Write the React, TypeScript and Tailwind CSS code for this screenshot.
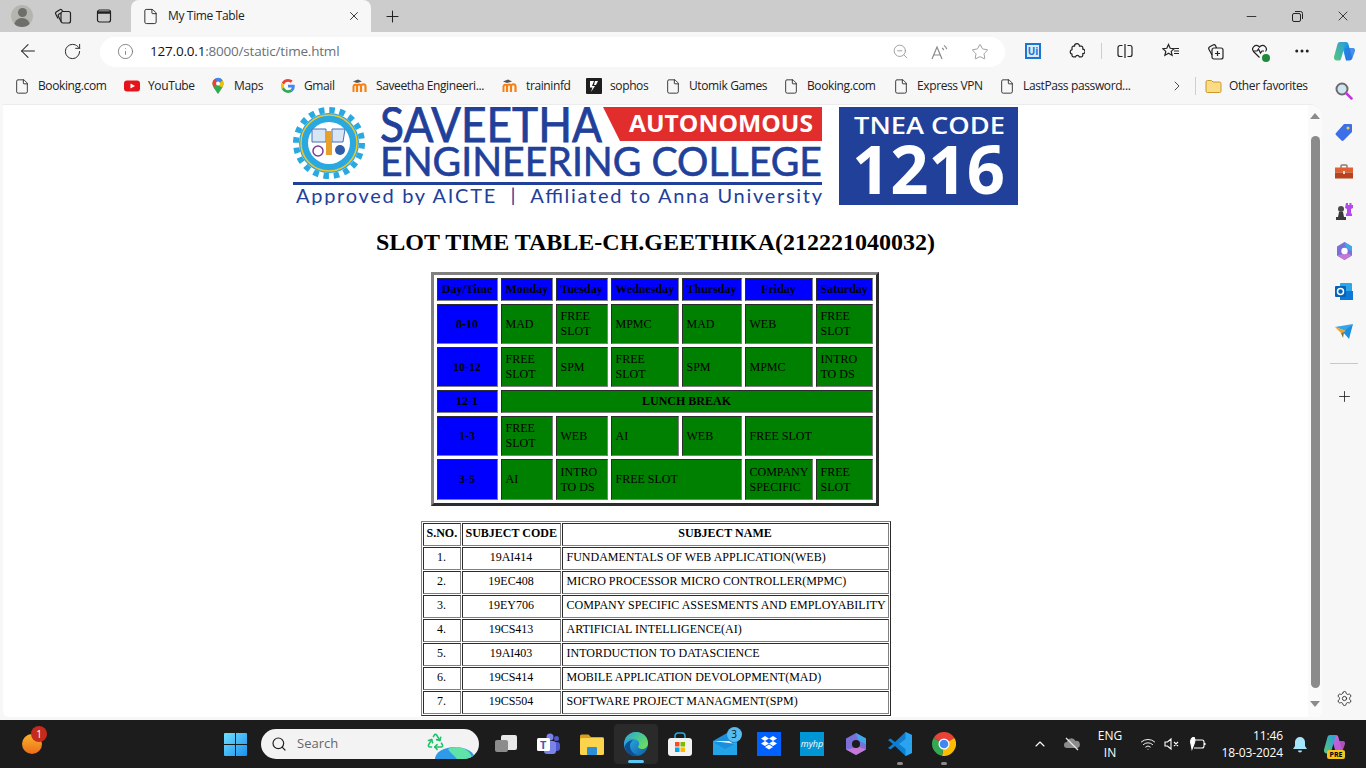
import { ArrowLeft, RotateCw, Info, ZoomOut, Star, X, Minus, Plus, MoreHorizontal, ChevronRight, ChevronUp, Settings, Search, Wifi, File, Recycle } from "lucide-react";
import type { ReactNode } from "react";

const ui = "font-['Open_Sans',sans-serif]";

const FileIcon = () => <File size={17} strokeWidth={1.3} className="text-[#222]" />;

const YouTubeIcon = () => (
  <svg width="16" height="16" viewBox="0 0 16 16"><rect y="2.500" width="16" height="11" rx="3" fill="#e6141a" /><path d="M6.500 5.500 11 8l-4.500 2.500z" fill="#fff" /></svg>
);
const MapsIcon = () => (
  <svg width="16" height="18" viewBox="0 0 16 18">
    <path d="M8 17C5 12.500 2.500 10 2.500 6.500a5.500 5.500 0 0 1 11 0C13.500 10 11 12.500 8 17z" fill="#34a853" />
    <path d="M2.500 6.500a5.500 5.500 0 0 1 3-4.900L9 5 4 10c-1-1.300-1.500-2.200-1.500-3.500z" fill="#ea4335" />
    <path d="M5.500 1.600A5.500 5.500 0 0 1 12.500 3.300L8 8z" fill="#4285f4" />
    <path d="M12.500 3.300c1 1 1 2.200 1 3.200 0 1.500-.6 2.700-1.500 3.900L8 8z" fill="#fbbc04" />
    <circle cx="8" cy="6.500" r="2" fill="#fff" />
  </svg>
);
const GoogleIcon = () => (
  <svg width="14" height="14" viewBox="0 0 48 48">
    <path fill="#ea4335" d="M24 9.500c3.500 0 6.700 1.300 9.100 3.500l6.800-6.800C35.800 2.400 30.200 0 24 0 14.600 0 6.500 5.400 2.600 13.200l7.900 6.100C12.400 13.600 17.700 9.500 24 9.500z" />
    <path fill="#4285f4" d="M47 24.500c0-1.600-.1-3.100-.4-4.500H24v9h13c-.6 3-2.300 5.500-4.800 7.200l7.700 6C44.400 37.900 47 31.800 47 24.500z" />
    <path fill="#fbbc05" d="M10.500 28.700a14.500 14.500 0 0 1 0-9.400l-7.900-6.100a24 24 0 0 0 0 21.600z" />
    <path fill="#34a853" d="M24 48c6.500 0 11.900-2.100 15.900-5.800l-7.700-6c-2.200 1.500-4.900 2.300-8.200 2.300-6.300 0-11.600-4.200-13.500-9.900l-7.900 6.100C6.500 42.600 14.600 48 24 48z" />
  </svg>
);
const MoodleIcon = () => (
  <svg width="16" height="14" viewBox="0 0 16 14">
    <path d="M1 2.500 6 .5l4 2-5 1.500z" fill="#555" />
    <path d="M5 13V7.500a2 2 0 0 1 4 0V13M9 13V7.500a2.200 2.200 0 0 1 4.500 0V13" fill="none" stroke="#f98012" strokeWidth="2.200" />
    <path d="M1.500 13V7.500C1.500 6 3 5.500 5 6" fill="none" stroke="#f98012" strokeWidth="2" />
  </svg>
);
const SophosIcon = () => (
  <svg width="16" height="16" viewBox="0 0 16 16"><rect width="16" height="16" rx="1" fill="#1e1e1e" /><path d="M4 3h4L6 8h3l-4 6 1.500-4.500H4zM9 3h3l-2 4H8z" fill="#fff" /></svg>
);

type Bm = { w: string; label: string; icon: ReactNode };
const bookmarks: Bm[] = [
  { w: "w-[110px]", label: "Booking.com", icon: <FileIcon /> },
  { w: "w-[86px]", label: "YouTube", icon: <YouTubeIcon /> },
  { w: "w-[70px]", label: "Maps", icon: <MapsIcon /> },
  { w: "w-[72px]", label: "Gmail", icon: <GoogleIcon /> },
  { w: "w-[150px]", label: "Saveetha Engineeri...", icon: <MoodleIcon /> },
  { w: "w-[84px]", label: "traininfd", icon: <MoodleIcon /> },
  { w: "w-[79px]", label: "sophos", icon: <SophosIcon /> },
  { w: "w-[118px]", label: "Utomik Games", icon: <FileIcon /> },
  { w: "w-[110px]", label: "Booking.com", icon: <FileIcon /> },
  { w: "w-[106px]", label: "Express VPN", icon: <FileIcon /> },
  { w: "w-[170px]", label: "LastPass password...", icon: <FileIcon /> },
];

const TabBar = () => (
  <div className="h-8 bg-[#cccccc] flex items-center text-[#222]">
    <div className="w-[44px] flex justify-center">
      <div className="w-[22px] h-[22px] rounded-full bg-[#b5b5b0] overflow-hidden flex flex-col items-center">
        <div className="w-[9px] h-[9px] rounded-full bg-[#6e6e6a] mt-[3px]" />
        <div className="w-[16px] h-[10px] rounded-t-full bg-[#6e6e6a] mt-[1px]" />
      </div>
    </div>
    <div className="w-[38px] flex justify-center">
      <svg width="18" height="18" viewBox="0 0 18 18" fill="none" stroke="#222" strokeWidth="1.200">
        <rect x="7" y="4.500" width="9.500" height="11.500" rx="2" /><path d="M7 6 4.800 7.200a1.500 1.500 0 0 0-.5 1.900L7 14.500" /><path d="M9 4.500 7.800 3a1.500 1.500 0 0 0-2-.3L2.200 5a1.500 1.500 0 0 0-.5 2L4 11.500" />
      </svg>
    </div>
    <div className="w-[44px] flex justify-center">
      <svg width="16" height="16" viewBox="0 0 16 16" fill="none" stroke="#222" strokeWidth="1.200"><rect x="1.500" y="2" width="13" height="12" rx="2" /><path d="M1.500 4.500h13" strokeWidth="2.500" /></svg>
    </div>
    <div className="w-[5px]" />
    <div className="w-[240px] h-8 bg-[#f7f7f7] rounded-t-lg flex items-center pl-[11px] pr-[10px]">
      <FileIcon />
      <span className={`${ui} text-[12px] tracking-[-0.35px] ml-[9px] flex-1 text-[#222]`}>My Time Table</span>
      <X size={14} strokeWidth={1.5} />
    </div>
    <div className="w-[42px] flex justify-center"><Plus size={19} strokeWidth={1.3} /></div>
    <div className="flex-1" />
    <div className="w-[46px] flex justify-center"><Minus size={15} strokeWidth={1.4} /></div>
    <div className="w-[46px] flex justify-center">
      <svg width="11" height="11" viewBox="0 0 11 11" fill="none" stroke="#222" strokeWidth="1"><rect x=".5" y="2.500" width="8" height="8" rx="1.500" /><path d="M3 .5h5.500a2 2 0 0 1 2 2V8" /></svg>
    </div>
    <div className="w-[46px] flex justify-center"><X size={16} strokeWidth={1.3} /></div>
  </div>
);

const Slot = ({ w, children }: { w: string; children: ReactNode }) => (
  <div className={`${w} flex justify-center items-center shrink-0`}>{children}</div>
);

const ReadAloud = () => (
  <svg width="20" height="18" viewBox="0 0 20 18" fill="none" stroke="#8a8a8a" strokeWidth="1.200">
    <path d="M2 16 7 4l5 12M3.800 12h6.400M12 5c1 .5 1.500 1.200 1.700 2.200M14 2.500c1.500.8 2.400 2 2.700 3.700" />
  </svg>
);
const CopilotIcon = ({ size, id, pink }: { size: number; id: string; pink?: boolean }) => (
  <svg width={size} height={size} viewBox="0 0 24 24">
    <defs>
      <linearGradient id={`${id}a`} x1="0" y1="0" x2="1" y2="1"><stop offset="0" stopColor={pink ? "#d86fd8" : "#1fb6e8"} /><stop offset="1" stopColor={pink ? "#8a5ae0" : "#1a5fd8"} /></linearGradient>
      <linearGradient id={`${id}b`} x1="0" y1="1" x2="1" y2="0"><stop offset="0" stopColor="#58c878" /><stop offset="1" stopColor="#2a9ce0" /></linearGradient>
    </defs>
    <path d="M9 3h5c1 0 2 .8 2.300 1.800L20 18c.5 2-1 3.500-3 3.500h-3z" fill={`url(#${id}a)`} />
    <path d="M8 3h6L9 20c-.3 1-1.300 1.500-2.300 1.500H5c-2 0-3.500-1.800-3-3.800L5.500 5C5.800 3.800 6.800 3 8 3z" fill={`url(#${id}b)`} />
    <path d="M13 9h8c1.500 0 2.500 1.500 2 3l-2.500 7c-.3 1-1.300 1.700-2.500 1.700h-3z" fill={pink ? "#c65ad8" : "#2a7be8"} opacity=".85" />
  </svg>
);

const Toolbar = () => (
  <div className="h-[38px] bg-[#f7f7f7] flex items-center text-[#222]">
    <Slot w="w-[56px]"><ArrowLeft size={22} strokeWidth={1.1} /></Slot>
    <Slot w="w-[32px]"><RotateCw size={19} strokeWidth={1.2} /></Slot>
    <div className="w-[12px]" />
    <div className="w-[905px] shrink-0 h-[30px] bg-white rounded-full flex items-center mt-[1px]">
      <Slot w="w-[50px]"><Info size={17} strokeWidth={1.1} className="text-[#666]" /></Slot>
      <span className={`${ui} text-[13.500px] flex-1 tracking-[-0.2px] text-[#68717a]`}><span className="text-[#111]">127.0.0.1</span>:8000/static/time.html</span>
      <Slot w="w-[40px]"><ZoomOut size={17} strokeWidth={1.1} className="text-[#8a8a8a]" /></Slot>
      <Slot w="w-[40px]"><ReadAloud /></Slot>
      <Slot w="w-[40px]"><Star size={18} strokeWidth={1.1} className="text-[#8a8a8a]" /></Slot>
      <div className="w-[5px]" />
    </div>
    <div className="w-[12px]" />
    <Slot w="w-[32px]">
      <div className={`w-4 h-4 border-2 border-[#1976d2] bg-[#d9ebfb] text-[#1976d2] text-[10px] font-bold leading-none flex items-center justify-center ${ui}`}>Ui</div>
    </Slot>
    <div className="w-[8px]" />
    <Slot w="w-[40px]">
      <svg width="16" height="16" viewBox="0 0 16 16" fill="none" stroke="#222" strokeWidth="1.200"><path d="M5.500 3.200a2.500 2.500 0 0 1 5 0h1.800a1.500 1.500 0 0 1 1.500 1.500v1.500a2.200 2.200 0 0 1 0 4.400v1.700a1.500 1.500 0 0 1-1.500 1.500h-2a2 2 0 0 0-3.800 0h-2A1.500 1.500 0 0 1 3 12.800v-1.600a2.300 2.300 0 0 1 0-4.500V4.700a1.500 1.500 0 0 1 1.500-1.500z" /></svg>
    </Slot>
    <div className="w-[4px]" />
    <div className="w-px h-[16px] bg-[#cfcfcf]" />
    <Slot w="w-[46px]">
      <svg width="16" height="14" viewBox="0 0 16 14" fill="none" stroke="#222" strokeWidth="1.200"><path d="M5.500 1.500H3a2 2 0 0 0-2 2v7a2 2 0 0 0 2 2h2.500M10.500 1.500H13a2 2 0 0 1 2 2v7a2 2 0 0 1-2 2h-2.500M8 0v14" /></svg>
    </Slot>
    <Slot w="w-[46px]">
      <svg width="18" height="16" viewBox="0 0 18 16" fill="none" stroke="#222" strokeWidth="1.200"><path d="M6.500 1.500 8.200 5.300l4 .4-3 2.700.9 4-3.600-2.100-3.600 2.100.9-4-3-2.700 4-.4zM12 8h5M12 10.500h5M13 5.500h4" /></svg>
    </Slot>
    <Slot w="w-[42px]">
      <svg width="17" height="17" viewBox="0 0 17 17" fill="none" stroke="#222" strokeWidth="1.200"><rect x="5" y="5" width="11" height="11" rx="2" /><path d="M10.500 8v5M8 10.500h5" /><path d="M5 12 2 6.500a2 2 0 0 1 .8-2.700L6 2a2 2 0 0 1 2.600.7L9.500 5" /></svg>
    </Slot>
    <Slot w="w-[46px]">
      <div className="relative">
        <svg width="17" height="16" viewBox="0 0 17 16" fill="none" stroke="#222" strokeWidth="1.200"><path d="M8.500 14.500 2.500 8.500a3.700 3.700 0 0 1 5.200-5.200l.8.8.8-.8a3.700 3.700 0 0 1 5.200 5.200" /><path d="M2 8h4l1.500-2 2 4L11 8h2" /></svg>
        <span className="absolute right-[-2px] bottom-[-3px] w-[8px] h-[8px] rounded-full bg-[#1f8a3b]" />
      </div>
    </Slot>
    <Slot w="w-[40px]"><MoreHorizontal size={18} strokeWidth={2} /></Slot>
    <Slot w="w-[44px]"><CopilotIcon size={24} id="cpt" /></Slot>
  </div>
);

const BookmarkBar = () => (
  <div className="h-[34px] bg-[#f7f7f7] flex items-center pl-[14px] pb-[2px] text-[#222]">
    {bookmarks.map((b, i) => (
      <div key={i} className={`${b.w} flex items-center shrink-0`}>
        <div className="w-4 flex justify-center mr-2">{b.icon}</div>
        <span className={`${ui} text-[12px] tracking-[-0.38px] whitespace-nowrap`}>{b.label}</span>
      </div>
    ))}
    <Slot w="w-[16px]"><ChevronRight size={18} strokeWidth={1.2} /></Slot>
    <div className="w-[10px]" />
    <div className="w-px h-[18px] bg-[#cfcfcf]" />
    <div className="w-[9px]" />
    <svg width="17" height="14" viewBox="0 0 17 14"><path d="M1 3a1.500 1.500 0 0 1 1.500-1.500h4L8 3h6.500A1.500 1.500 0 0 1 16 4.500V12a1.500 1.500 0 0 1-1.500 1.500h-12A1.500 1.500 0 0 1 1 12z" fill="#fbdc85" stroke="#c9992e" /></svg>
    <span className={`${ui} text-[12px] tracking-[-0.38px] ml-[7px]`}>Other favorites</span>
  </div>
);

const Logo = () => (
  <svg width="725" height="98" viewBox="0 0 725 98" className="block">
    <circle cx="36" cy="36" r="33" fill="none" stroke="#29a9e0" strokeWidth="6" strokeDasharray="5.500 4.870" />
    <circle cx="36" cy="36" r="30" fill="#29a9e0" />
    <circle cx="36" cy="36" r="28" fill="none" stroke="#f0c52e" strokeWidth="1.500" />
    <circle cx="36" cy="36" r="21" fill="#fff" />
    <path d="M19 22h14v13H19zM39 22h13l-2 13H39z" fill="#d7e6f5" stroke="#4a6fb5" />
    <path d="M33 24h6v24h-6z" fill="#e8a02a" />
    <circle cx="25" cy="44" r="5" fill="none" stroke="#7a3f98" strokeWidth="1.500" />
    <circle cx="47" cy="43" r="5" fill="#2f5ea8" />
    <text x="87" y="35" fontFamily="Lato, sans-serif" fontSize="48" fill="#21409a" stroke="#21409a" strokeWidth=".8" textLength="222" lengthAdjust="spacingAndGlyphs">SAVEETHA</text>
    <polygon points="310,0 529,0 529,34 327,34" fill="#e22d2d" />
    <text x="336" y="25" fontFamily="'Open Sans', sans-serif" fontWeight="700" fontSize="23" fill="#fff" textLength="184" lengthAdjust="spacingAndGlyphs">AUTONOMOUS</text>
    <text x="87" y="69" fontFamily="Lato, sans-serif" fontSize="40" fill="#21409a" stroke="#21409a" strokeWidth=".6" textLength="442" lengthAdjust="spacingAndGlyphs">ENGINEERING COLLEGE</text>
    <rect x="0" y="75" width="529" height="3" fill="#21409a" />
    <text x="3" y="96" fontFamily="Lato, sans-serif" fontSize="20" fill="#21409a" textLength="526" lengthAdjust="spacing" xmlSpace="preserve">Approved by AICTE  |  Affiliated to Anna University</text>
    <rect x="546" y="0" width="179" height="98" fill="#21409a" />
    <text x="561" y="27" fontFamily="'Open Sans', sans-serif" fontSize="23" fontWeight="600" fill="#fff" textLength="151" lengthAdjust="spacingAndGlyphs">TNEA CODE</text>
    <text x="559" y="87" fontFamily="'Open Sans', sans-serif" fontWeight="700" fontSize="66" fill="#fff" textLength="153" lengthAdjust="spacingAndGlyphs">1216</text>
  </svg>
);

const tdBase = "border border-[#808080] [border-style:inset] px-1 py-0 leading-[15px] text-black";
const blue = `${tdBase} bg-[#0000ff] font-bold text-center`;
const green = `${tdBase} bg-[#008000]`;

const headCols = [
  ["Day/Time", "w-[61px]"],
  ["Monday", "w-[52px]"],
  ["Tuesday", "w-[52px]"],
  ["Wednesday", "w-[68px]"],
  ["Thursday", "w-[60px]"],
  ["Friday", "w-[68px]"],
  ["Saturday", "w-[57px]"],
];

const TimeTable = () => (
  <table className="table-fixed w-[448px] border-separate border-spacing-[3px] border-[3px] [border-style:outset] border-[#808080] text-[12px] mr-[2px] shrink-0">
    <tbody>
      <tr className="h-[23px]">
        {headCols.map(([d, w]) => (
          <th key={d} className={`${blue} ${w}`}>{d}</th>
        ))}
      </tr>
      <tr className="h-[40px]">
        <td className={blue}>8-10</td>
        <td className={green}>MAD</td>
        <td className={green}>FREE SLOT</td>
        <td className={green}>MPMC</td>
        <td className={green}>MAD</td>
        <td className={green}>WEB</td>
        <td className={green}>FREE SLOT</td>
      </tr>
      <tr className="h-[40px]">
        <td className={blue}>10-12</td>
        <td className={green}>FREE SLOT</td>
        <td className={green}>SPM</td>
        <td className={green}>FREE SLOT</td>
        <td className={green}>SPM</td>
        <td className={green}>MPMC</td>
        <td className={green}>INTRO TO DS</td>
      </tr>
      <tr className="h-[23px]">
        <td className={blue}>12-1</td>
        <td colSpan={6} className={`${green} font-bold text-center`}>LUNCH BREAK</td>
      </tr>
      <tr className="h-[40px]">
        <td className={blue}>1-3</td>
        <td className={green}>FREE SLOT</td>
        <td className={green}>WEB</td>
        <td className={green}>AI</td>
        <td className={green}>WEB</td>
        <td colSpan={2} className={green}>FREE SLOT</td>
      </tr>
      <tr className="h-[41px]">
        <td className={blue}>3-5</td>
        <td className={green}>AI</td>
        <td className={green}>INTRO TO DS</td>
        <td colSpan={2} className={green}>FREE SLOT</td>
        <td className={green}>COMPANY SPECIFIC</td>
        <td className={green}>FREE SLOT</td>
      </tr>
    </tbody>
  </table>
);

const subjects = [
  ["1.", "19AI414", "FUNDAMENTALS OF WEB APPLICATION(WEB)"],
  ["2.", "19EC408", "MICRO PROCESSOR MICRO CONTROLLER(MPMC)"],
  ["3.", "19EY706", "COMPANY SPECIFIC ASSESMENTS AND EMPLOYABILITY"],
  ["4.", "19CS413", "ARTIFICIAL INTELLIGENCE(AI)"],
  ["5.", "19AI403", "INTORDUCTION TO DATASCIENCE"],
  ["6.", "19CS414", "MOBILE APPLICATION DEVOLOPMENT(MAD)"],
  ["7.", "19CS504", "SOFTWARE PROJECT MANAGMENT(SPM)"],
];
const subCell = "border border-[#808080] [border-style:inset] px-[3px] pt-0 pb-[3px] leading-[14px] text-black";

const SubjectTable = () => (
  <table className="table-fixed w-[470px] border-separate border-spacing-[1px] border border-[#808080] [border-style:outset] text-[12px] mx-auto mt-[15px] shrink-0">
    <tbody>
      <tr className="h-[23px]">
        <th className={`${subCell} w-[38px] whitespace-nowrap`}>S.NO.</th>
        <th className={`${subCell} w-[99px] whitespace-nowrap`}>SUBJECT CODE</th>
        <th className={`${subCell} w-[327px]`}>SUBJECT NAME</th>
      </tr>
      {subjects.map((s) => (
        <tr key={s[0]} className="h-[23px]">
          <td className={`${subCell} text-center`}>{s[0]}</td>
          <td className={`${subCell} text-center`}>{s[1]}</td>
          <td className={`${subCell} !pl-[4px] whitespace-nowrap`}>{s[2]}</td>
        </tr>
      ))}
    </tbody>
  </table>
);

const Scrollbar = () => (
  <div className="w-[14px] bg-[#fafafa] flex flex-col items-center shrink-0">
    <div className="w-0 h-0 mt-[8px] border-x-[5px] border-x-transparent border-b-[6px] border-b-[#8b8b8b]" />
    <div className="w-[9px] flex-1 bg-[#8b8b8b] rounded-full mt-[17px] mb-[13px]" />
    <div className="w-0 h-0 mb-[10px] border-x-[5px] border-x-transparent border-t-[6px] border-t-[#8b8b8b]" />
  </div>
);

const Sidebar = () => (
  <div className="flex-1 flex flex-col items-center relative -mt-[29px] h-[650px]">
    <div className="h-[40px] flex items-center -mt-[4px]">
      <svg width="18" height="18" viewBox="0 0 18 18"><circle cx="7" cy="7" r="5.500" fill="#cfe6f2" stroke="#6b6b6b" strokeWidth="2" /><path d="m11 11 5.500 5.500" stroke="#c038d8" strokeWidth="2.500" strokeLinecap="round" /></svg>
    </div>
    <div className="h-[40px] flex items-center mt-[1px] -mb-[1px]">
      <svg width="18" height="18" viewBox="0 0 18 18"><path d="M9 1h7a1 1 0 0 1 1 1v7l-8.500 8.500a1.500 1.500 0 0 1-2 0L1 12a1.500 1.500 0 0 1 0-2z" fill="#3d6fe8" /><circle cx="13" cy="5" r="1.500" fill="#f5cf3d" /></svg>
    </div>
    <div className="h-[40px] flex items-center">
      <svg width="18" height="15" viewBox="0 0 18 15"><path d="M6 4V2a1 1 0 0 1 1-1h4a1 1 0 0 1 1 1v2" fill="none" stroke="#8a7a70" strokeWidth="1.500" /><rect y="3.500" width="18" height="5" fill="#e0602f" /><rect y="8.500" width="18" height="6" fill="#b8431d" /><rect x="8" y="7" width="2" height="3" fill="#ddd" /></svg>
    </div>
    <div className="h-[40px] flex items-center">
      <svg width="19" height="18" viewBox="0 0 19 18"><circle cx="6" cy="7" r="3" fill="#4a4a4a" /><path d="M4 10h4l1 5H3zM1 15h10v3H1z" fill="#3a3a3a" /><path d="M11 1h2v2h1.500V1h2v2H18V1v5l-2 1v4l1 1v2h-6v-2l1-1V7l-2-1z" fill="#b44be8" /></svg>
    </div>
    <div className="h-[40px] flex items-center">
      <svg width="17" height="18" viewBox="0 0 17 18"><path d="M8.500 0 16 4.500v9L8.500 18 1 13.500v-9z" fill="#7b6fd8" /><path d="M8.500 0 16 4.500v5L10 6z" fill="#3ea8e8" /><path d="M1 13.500 8.500 18l7.500-4.500L11 11z" fill="#c478d8" /><circle cx="8.500" cy="9" r="3.200" fill="#fff" /></svg>
    </div>
    <div className="h-[40px] flex items-center">
      <svg width="18" height="17" viewBox="0 0 18 17"><rect x="5" y="0" width="12" height="15" rx="1" fill="#28a8ea" /><rect x="5" y="8" width="13" height="9" fill="#0f78d4" /><rect y="3" width="11" height="11" rx="1" fill="#0364b8" /><circle cx="5.500" cy="8.500" r="3" fill="none" stroke="#fff" strokeWidth="1.500" /></svg>
    </div>
    <div className="h-[40px] flex items-center">
      <svg width="18" height="15" viewBox="0 0 18 15"><path d="M0 3 18 0 11 7z" fill="#35a4e8" /><path d="M18 0 14 15 8 8z" fill="#1c8ee0" /><path d="M0 3 11 7 6 9z" fill="#f2a31d" /><path d="M6 9 8 14 9 8z" fill="#8a6a20" /></svg>
    </div>
    <div className="w-[28px] h-px bg-[#c8c8c8] mt-[12px]" />
    <div className="mt-[24px]"><Plus size={17} strokeWidth={1.2} className="text-[#222]" /></div>
    <div className="absolute bottom-[18px]"><Settings size={17} strokeWidth={1.2} className="text-[#222]" /></div>
  </div>
);

const TeamsIcon = () => (
  <svg width="24" height="24" viewBox="0 0 24 24">
    <circle cx="14" cy="5" r="3.500" fill="#7b83eb" /><circle cx="20.500" cy="6.500" r="2.500" fill="#5059c9" />
    <rect x="17" y="10" width="7" height="9" rx="3" fill="#5059c9" /><rect x="8" y="9" width="12" height="13" rx="3" fill="#7b83eb" />
    <rect x="1" y="6" width="13" height="13" rx="1.500" fill="#fff" />
    <text x="4" y="16.500" fontFamily="'Open Sans', sans-serif" fontWeight="700" fontSize="11" fill="#4b53bc">T</text>
  </svg>
);
const FolderIcon = () => (
  <svg width="24" height="21" viewBox="0 0 24 21">
    <path d="M0 2a1.500 1.500 0 0 1 1.500-1.500h7L11 3h11.500A1.500 1.500 0 0 1 24 4.500V8H0z" fill="#d99e1b" />
    <rect y="4" width="24" height="17" rx="1.500" fill="#fcd34d" />
    <rect x="7" y="13" width="10" height="8" rx="1" fill="#2a8fd6" />
  </svg>
);
const EdgeIcon = () => (
  <svg width="24" height="24" viewBox="0 0 24 24">
    <defs>
      <linearGradient id="edg" x1="0" y1="0" x2="1" y2="1"><stop offset="0" stopColor="#35c1f1" /><stop offset="1" stopColor="#0c59a4" /></linearGradient>
      <linearGradient id="edh" x1="0" y1="0" x2="1" y2="1"><stop offset="0" stopColor="#2fa3d8" /><stop offset=".6" stopColor="#52d17c" /><stop offset="1" stopColor="#78e05a" /></linearGradient>
    </defs>
    <circle cx="12" cy="12" r="12" fill="url(#edg)" />
    <path d="M1 9C3 3 8 0 12 0c7 0 12 5 12 11 0 4-3 6-6 6-2 0-4-1-4-2.500 2-1.500 1.500-5-1-6.500C9 5.500 3 6 1 9z" fill="url(#edh)" />
    <path d="M11 8c-3 0-5 2.500-5 6 0 4 3 8 8 9.500-6 1.500-12-2-13-8-.5-3 3-8 10-7.500z" fill="#0c4f94" />
  </svg>
);
const StoreIcon = () => (
  <svg width="24" height="24" viewBox="0 0 24 24">
    <path d="M7 7V4a3 3 0 0 1 3-3h4a3 3 0 0 1 3 3v3" fill="none" stroke="#2ba7e0" strokeWidth="1.500" />
    <rect y="6" width="24" height="18" rx="3" fill="#f2f2f2" />
    <rect x="7" y="10" width="4.500" height="4.500" fill="#f25022" /><rect x="12.500" y="10" width="4.500" height="4.500" fill="#7fba00" />
    <rect x="7" y="15.500" width="4.500" height="4.500" fill="#00a4ef" /><rect x="12.500" y="15.500" width="4.500" height="4.500" fill="#ffb900" />
  </svg>
);
const MailIcon = () => (
  <div className="relative">
    <svg width="24" height="22" viewBox="0 0 24 22">
      <path d="M0 8 14 0l10 6v15a1 1 0 0 1-1 1H1a1 1 0 0 1-1-1z" fill="#1b8fd9" />
      <path d="M0 8h16l8 5v-2z" fill="#fff" opacity=".9" />
      <path d="M0 9 12 16 24 10v12H0z" fill="#23a4e8" />
    </svg>
    <span className={`absolute -top-[6px] -right-[5px] w-[15px] h-[15px] rounded-full bg-[#56bdf0] text-[10px] leading-[15px] text-center text-[#111] ${ui}`}>3</span>
  </div>
);
const DropboxIcon = () => (
  <svg width="24" height="24" viewBox="0 0 24 24">
    <rect width="24" height="24" fill="#0061fe" />
    <path d="m8 4 4 2.500L8 9 4 6.500zM16 4l4 2.500L16 9l-4-2.500zM8 9l4 2.500L8 14l-4-2.500zM16 9l4 2.500-4 2.500-4-2.500zM8 15l4-2.500 4 2.500-4 2.500z" fill="#fff" />
  </svg>
);
const MyHpIcon = () => (
  <div className={`w-6 h-6 bg-[#0096d6] flex items-center justify-center text-white text-[9px] italic ${ui}`}>myhp</div>
);
const M365Icon = () => (
  <svg width="20" height="22" viewBox="0 0 20 22">
    <path d="M10 0 20 5.500v11L10 22 0 16.500v-11z" fill="#7b6fd8" /><path d="M10 0 20 5.500v6L12 7z" fill="#3ea8e8" /><path d="M0 16.500 10 22l10-5.500L13 14z" fill="#c478d8" /><circle cx="10" cy="11" r="4" fill="#1c1c1c" />
  </svg>
);
const VsCodeIcon = () => (
  <svg width="24" height="24" viewBox="0 0 24 24">
    <path d="M17.500 0 24 3v18l-6.500 3L7 14l-4.500 3.500L0 16l5-4-5-4 2.500-1.500L7 10z" fill="#0e7fd0" />
    <path d="M17.500 0 24 3v18l-6.500 3V17L11 12l6.500-5z" fill="#2aa4ee" />
  </svg>
);
const ChromeIcon = () => (
  <svg width="24" height="24" viewBox="0 0 24 24">
    <path d="M12 12 1.600 6A12 12 0 0 1 22.400 6z" fill="#ea4335" />
    <path d="M12 12 22.400 6A12 12 0 0 1 10 23.800z" fill="#fbbc04" />
    <path d="M12 12 10 23.800A12 12 0 0 1 1.600 6z" fill="#34a853" />
    <circle cx="12" cy="12" r="5.500" fill="#fff" /><circle cx="12" cy="12" r="4.300" fill="#4285f4" />
  </svg>
);
const CubeIcon = () => (
  <div className="relative w-6 h-6">
    <div className="absolute right-0 top-[3px] w-[16px] h-[15px] bg-[#e8e8e8] rounded-[2px]" />
    <div className="absolute left-[2px] top-[8px] w-[13px] h-[12px] bg-[#8c8c8c] rounded-[2px]" />
  </div>
);

const taskItems: { w: string; icon: ReactNode; mark?: boolean }[] = [
  { w: "w-[42px]", icon: <CubeIcon /> },
  { w: "w-[44px]", icon: <TeamsIcon /> },
  { w: "w-[44px]", icon: <FolderIcon /> },
  { w: "w-[44px]", icon: <EdgeIcon /> },
  { w: "w-[44px]", icon: <StoreIcon /> },
  { w: "w-[45px]", icon: <MailIcon /> },
  { w: "w-[43px]", icon: <DropboxIcon /> },
  { w: "w-[44px]", icon: <MyHpIcon /> },
  { w: "w-[44px]", icon: <M365Icon /> },
  { w: "w-[43px]", icon: <VsCodeIcon />, mark: true },
  { w: "w-[45px]", icon: <ChromeIcon />, mark: true },
];

const Taskbar = () => (
  <div className="h-12 bg-[#1c1c1c] flex items-center text-white">
    <div className="w-[224px] pl-[22px]">
      <div className="relative w-5 h-5 rounded-full bg-gradient-to-b from-[#f7b32b] to-[#ee6c1a]">
        <span className={`absolute -top-[8px] left-[9px] w-4 h-4 rounded-full bg-[#c42b1c] text-[10px] leading-4 text-center ${ui}`}>1</span>
      </div>
    </div>
    <svg width="23" height="23" viewBox="0 0 23 23">
      <defs><linearGradient id="wn" x1="0" y1="0" x2="1" y2="1"><stop offset="0" stopColor="#6fe0ff" /><stop offset="1" stopColor="#1a8fee" /></linearGradient></defs>
      <path d="M0 1a1 1 0 0 1 1-1h10v11H0zM12 0h10a1 1 0 0 1 1 1v10H12zM0 12h11v11H1a1 1 0 0 1-1-1zM12 12h11v10a1 1 0 0 1-1 1H12z" fill="url(#wn)" />
    </svg>
    <div className="w-[14px]" />
    <div className="w-[218px] h-[30px] bg-[#f3f3f3] rounded-full flex items-center pl-[10px] relative overflow-hidden">
      <Search size={16} strokeWidth={1.8} className="text-[#222]" />
      <span className={`${ui} text-[13px] text-[#666] ml-[10px]`}>Search</span>
      <Recycle size={19} strokeWidth={2} className="absolute left-[165px] top-[3px] text-[#1fc16b]" />
      <svg width="40" height="14" viewBox="0 0 40 14" className="absolute left-[174px] bottom-0"><ellipse cx="20" cy="14" rx="20" ry="12" fill="#2f9be8" /><path d="M13 4c5-3 14-3 20 2 2 2 4 5 4 8H22c-2-3-6-5-9-10z" fill="#5fe3a8" /></svg>
    </div>
    <div className="w-[5px]" />
    {taskItems.map((t, i) => (
      <div key={i} className={`${t.w} h-10 flex items-center justify-center relative shrink-0 ${i === 3 ? "rounded-[4px] bg-[#2a2a2a]" : ""}`}>
        {t.icon}
        {i === 3 && <span className="absolute bottom-[1px] w-[16px] h-[3px] rounded-full bg-[#5cc5f2]" />}
        {t.mark && <span className="absolute bottom-[-1px] w-[6px] h-[3px] rounded-full bg-[#8a8a8a]" />}
      </div>
    ))}
    <div className="w-[66px]" />
    <Slot w="w-[16px]"><ChevronUp size={16} strokeWidth={1.6} /></Slot>
    <div className="w-[16px]" />
    <svg width="16" height="14" viewBox="0 0 16 14"><path d="M3 11a3 3 0 0 1 0-6 4.500 4.500 0 0 1 8.500-1A3.500 3.500 0 0 1 13 11z" fill="#8c8c8c" /><path d="M2 1l12 12" stroke="#e8e8e8" strokeWidth="1.300" /></svg>
    <div className={`${ui} w-[60px] text-[12px] leading-[17px] text-center`}>ENG<br />IN</div>
    <Slot w="w-[16px]"><Wifi size={16} strokeWidth={1.4} /></Slot>
    <div className="w-[8px]" />
    <svg width="16" height="14" viewBox="0 0 16 14" fill="none" stroke="#fff" strokeWidth="1.100"><path d="M1 5h2.500L7 2v10L3.500 9H1zM10 5l4 4M14 5l-4 4" /></svg>
    <div className="w-[9px]" />
    <svg width="17" height="14" viewBox="0 0 17 14" fill="none" stroke="#fff" strokeWidth="1.100"><path d="M5 3h8a2 2 0 0 1 2 2v4a2 2 0 0 1-2 2H5M16 6v2" /><path d="M5 0C2 1 1 4 2 7l1 5 2-5c1-2 1-5 0-7z" fill="#fff" /></svg>
    <div className={`${ui} w-[77px] text-[12px] tracking-[-0.1px] leading-[17px] text-right`}>11:46<br />18-03-2024</div>
    <div className="w-[9px]" />
    <svg width="16" height="17" viewBox="0 0 16 17"><path d="M8 1a5 5 0 0 1 5 5v4l2 3H1l2-3V6a5 5 0 0 1 5-5zM6 14.500h4a2 2 0 0 1-4 0z" fill="#a5e6fb" /></svg>
    <div className="w-[14px]" />
    <div className="relative">
      <CopilotIcon size={24} id="cpk" pink />
      <span className={`absolute -bottom-[3px] left-[5px] w-[18px] h-[9px] rounded-[2px] bg-[#f5c518] text-[7px] leading-[9px] font-bold text-black text-center ${ui}`}>PRE</span>
    </div>
  </div>
);

export default function App() {
  return (
    <div className="w-[1366px] h-[768px] overflow-hidden bg-[#f7f7f7] flex flex-col font-['Liberation_Serif',serif]">
      <TabBar />
      <Toolbar />
      <BookmarkBar />
      <div className="h-[616px] flex">
        <div className="w-[3px]" />
        <div className="w-[1319px] h-[613px] bg-white rounded-tr-xl rounded-bl-md rounded-br-md overflow-hidden flex border-t border-[#ececec]">
          <div className="flex-1 overflow-hidden flex flex-col items-center pt-[2px]">
            <Logo />
            <h2 className="text-[24px] font-bold leading-[27px] text-black mt-[24px] mb-[16px]">SLOT TIME TABLE-CH.GEETHIKA(212221040032)</h2>
            <TimeTable />
            <SubjectTable />
          </div>
          <Scrollbar />
        </div>
        <Sidebar />
      </div>
      <Taskbar />
    </div>
  );
}
